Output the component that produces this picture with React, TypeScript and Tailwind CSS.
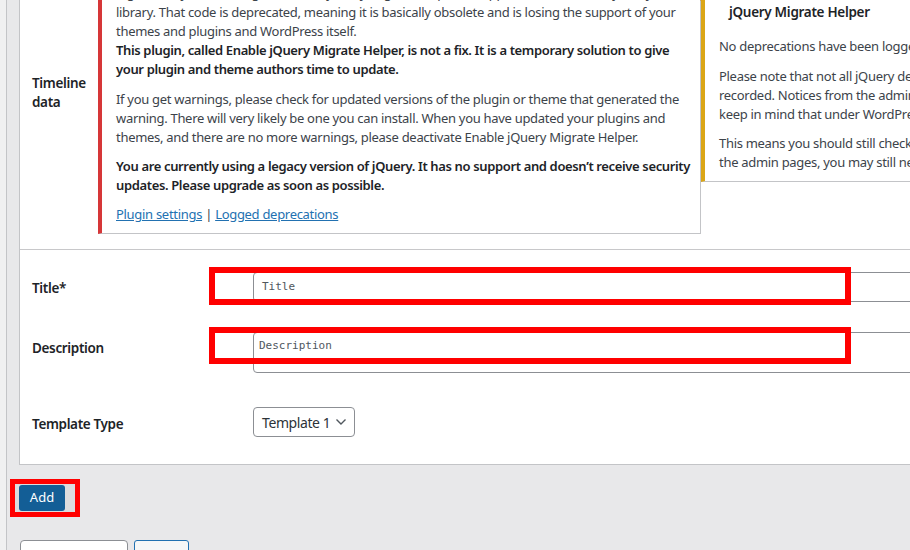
import React from "react";

const Line = ({ children, className = "" }: { children: React.ReactNode; className?: string }) => (
  <div className={"whitespace-nowrap " + className}>{children}</div>
);

const labelCls = "text-[13.5px] tracking-[-0.35px] leading-[19px] font-semibold text-[#1d2327]";

export default function App() {
  return (
    <div className="relative flex w-[910px] h-[550px] overflow-hidden bg-[#e8e8ea] font-['Noto_Sans',sans-serif] text-[#3c434a]">
      {/* left gutter */}
      <div className="w-[6px] shrink-0 bg-[#f0f0f1]" />
      <div className="w-[1px] shrink-0 bg-[#c3c4c7]" />
      <div className="w-[12px] shrink-0" />

      <div className="flex flex-col w-[1000px] shrink-0">
        {/* panel */}
        <div className="flex flex-col bg-white border-l border-b border-[#c3c4c7]">
          {/* row 1 */}
          <div className="flex h-[250px] border-b border-[#c8c8ca]">
            <div className={"w-[78px] shrink-0 pl-3 pt-[74px] " + labelCls}>
              Timeline
              <br />
              data
            </div>
            <div className="w-[603px] shrink-0 h-[234px] flex flex-col border-l-4 border-l-[#d63638] border-r border-b border-r-[#c3c4c7] border-b-[#c3c4c7] pl-[14px] text-[13px] leading-[19px] tracking-[-0.3px]">
              <div className="-mt-[16px]">
                <Line>Right now, you are using the Enable jQuery Migrate Helper to support old code in the jQuery JavaScript</Line>
                <Line>library. That code is deprecated, meaning it is basically obsolete and is losing the support of your</Line>
                <Line>themes and plugins and WordPress itself.</Line>
                <Line className="font-semibold text-[#1d2327] tracking-[-0.36px]">This plugin, called Enable jQuery Migrate Helper, is not a fix. It is a temporary solution to give</Line>
                <Line className="font-semibold text-[#1d2327] tracking-[-0.36px]">your plugin and theme authors time to update.</Line>
              </div>
              <div className="mt-[11px]">
                <Line>If you get warnings, please check for updated versions of the plugin or theme that generated the</Line>
                <Line>warning. There will very likely be one you can install. When you have updated your plugins and</Line>
                <Line>themes, and there are no more warnings, please deactivate Enable jQuery Migrate Helper.</Line>
              </div>
              <div className="mt-[10px] font-semibold text-[#1d2327] tracking-[-0.36px]">
                <Line>You are currently using a legacy version of jQuery. It has no support and doesn’t receive security</Line>
                <Line>updates. Please upgrade as soon as possible.</Line>
              </div>
              <div className="mt-[10px]">
                <Line>
                  <span className="text-[#2271b1] underline">Plugin settings</span> |{" "}
                  <span className="text-[#2271b1] underline">Logged deprecations</span>
                </Line>
              </div>
            </div>
            <div className="w-[300px] shrink-0 h-[182px] flex flex-col border-l-4 border-l-[#dba617] border-b border-b-[#c3c4c7] pl-[14px] text-[13px] leading-[19px] tracking-[-0.3px] overflow-hidden">
              <div className="mt-[3px] pl-[10px] text-[13.5px] tracking-[-0.3px] font-semibold text-[#1d2327] whitespace-nowrap">jQuery Migrate Helper</div>
              <div className="mt-[15px]">
                <Line>No deprecations have been logged</Line>
              </div>
              <div className="mt-[11px]">
                <Line>Please note that not all jQuery deprecations can be</Line>
                <Line>recorded. Notices from the admin interface are not</Line>
                <Line>keep in mind that under WordPress 5.6 and later</Line>
              </div>
              <div className="mt-[10px]">
                <Line>This means you should still check your site, even if</Line>
                <Line>the admin pages, you may still need this plugin</Line>
              </div>
            </div>
          </div>

          {/* row 2: title */}
          <div className="flex h-[67px]">
            <div className={"w-[233px] shrink-0 pl-3 pt-[29px] " + labelCls}>Title*</div>
            <div className="mt-[22px] w-[700px] h-[30px] rounded-[4px] border border-[#8c8f94] pl-[8px] flex items-center font-['DejaVu_Sans_Mono',monospace] text-[11px] text-[#50575e]">
              Title
            </div>
          </div>

          {/* row 3: description */}
          <div className="flex h-[75px]">
            <div className={"w-[233px] shrink-0 pl-3 pt-[22px] " + labelCls}>Description</div>
            <div className="mt-[15px] w-[700px] h-[41px] rounded-[4px] border border-[#8c8f94] pl-[5px] pt-[5px] font-['DejaVu_Sans_Mono',monospace] text-[11px] leading-[15px] text-[#50575e]">
              Description
            </div>
          </div>

          {/* row 4: template type */}
          <div className="flex h-[72px]">
            <div className={"w-[233px] shrink-0 pl-3 pt-[23px] " + labelCls}>Template Type</div>
            <div className="mt-[15px] w-[102px] h-[30px] rounded-[4px] border border-[#8c8f94] pl-[8px] pr-[6px] flex items-center justify-between text-[14px] tracking-[-0.4px] text-[#2c3338]">
              <span>Template 1</span>
              <svg width="12" height="8" viewBox="0 0 12 8" className="mr-[1px]">
                <polyline points="1.5,1.5 6,6 10.5,1.5" fill="none" stroke="#50575e" strokeWidth="1.4" />
              </svg>
            </div>
          </div>
        </div>

        {/* add button */}
        <div className="relative z-10 mt-[20px] flex">
          <div className="w-[46px] h-[26px] rounded-[3px] bg-[#135e96] text-white text-[13px] flex items-center justify-center">
            Add
          </div>
        </div>

        {/* bottom boxes */}
        <div className="mt-[29px] flex gap-[6px] pl-[1px]">
          <div className="w-[108px] h-[30px] rounded-[4px] border border-[#8c8f94] bg-white" />
          <div className="w-[55px] h-[30px] rounded-[3px] border border-[#2271b1] bg-[#f6f7f7]" />
        </div>
      </div>

      {/* red annotation boxes */}
      <div className="absolute left-[209px] top-[267px] w-[642px] h-[38px] border-[6px] border-[#ff0000]" />
      <div className="absolute left-[209px] top-[327px] w-[642px] h-[37px] border-[6px] border-[#ff0000]" />
      <div className="absolute z-0 left-[10px] top-[479px] w-[70px] h-[38px] border-[5px] border-[#ff0000] bg-[#dcdcde]" />
    </div>
  );
}
